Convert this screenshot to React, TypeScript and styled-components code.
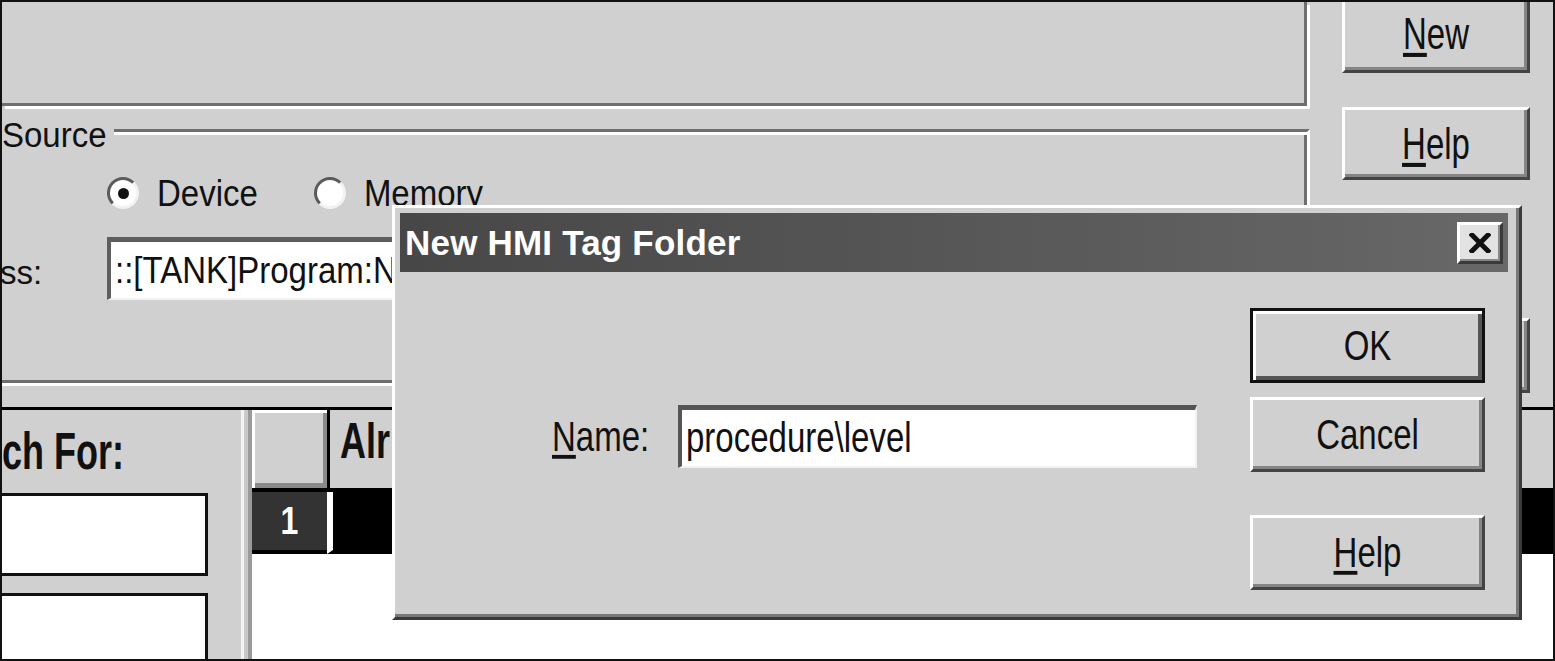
import styled, { createGlobalStyle } from "styled-components";

const face = `"Liberation Sans", Arial, sans-serif`;

const GlobalStyle = createGlobalStyle`
  html, body { margin: 0; padding: 0; background: #d0d0d0; }
  *, *::before, *::after { box-sizing: border-box; }
  body { font-family: ${face}; }
`;

const Screen = styled.div`
  position: relative;
  width: 1555px;
  height: 661px;
  border: 2px solid #111;
  background: #d0d0d0;
  overflow: hidden;
  display: flex;
  flex-direction: column;
  font-family: ${face};
  font-size: 33px;
  color: #111;
`;

// old 8pt dialog text blown up: glyphs are taller than Arial
const Stretch = styled.span<{ $sy?: number }>`
  display: inline-block;
  transform: scaleY(${(p) => p.$sy ?? 1.25});
`;

const Mnemonic = styled.span`
  text-decoration: underline;
  text-decoration-thickness: 3px;
  text-underline-offset: 3px;
`;

/* ---------- window behind ---------- */

const Upper = styled.div`
  display: grid;
  grid-template-columns: 1308px 1fr;
  height: 405px;
  flex-shrink: 0;
`;

const MainColumn = styled.div`
  display: flex;
  flex-direction: column;
  min-width: 0;
`;

const TopPanel = styled.div`
  width: 1305px;
  height: 104px;
  flex-shrink: 0;
  border-right: 3px solid #6e6e6e;
  border-bottom: 3px solid #6e6e6e;
  box-shadow: 3px 3px 0 #fff;
`;

const SourceGroup = styled.fieldset`
  margin: 6px 0 0 -22px;
  width: 1330px;
  height: 274px;
  padding: 0 0 0 22px;
  border: 3px solid;
  border-color: #6e6e6e #fff #fff #6e6e6e;
  box-shadow: inset 3px 3px 0 #fff, inset -3px -3px 0 #6e6e6e;
  min-width: 0;
`;

const GroupLegend = styled.legend`
  margin-left: -3px;
  padding: 0 7px 0 0;
  line-height: 36px;
  background: #d0d0d0;
  position: relative;
  top: 5px;
`;

const RadioRow = styled.div`
  display: flex;
  align-items: center;
  height: 36px;
  margin: 27px 0 0 102px;
`;

const RadioItem = styled.label`
  display: flex;
  align-items: center;
  gap: 18px;
  margin-right: 56px;
`;

const RadioDot = styled.span<{ $checked?: boolean }>`
  width: 32px;
  height: 32px;
  border-radius: 50%;
  background: #fff;
  border: 3px solid;
  border-color: #5a5a5a #f2f2f2 #f2f2f2 #5a5a5a;
  display: inline-flex;
  align-items: center;
  justify-content: center;
  &::after {
    content: "";
    width: 11px;
    height: 11px;
    border-radius: 50%;
    background: ${(p) => (p.$checked ? "#111" : "transparent")};
  }
`;

const FieldRow = styled.div`
  display: flex;
  align-items: center;
  margin-top: 26px;
`;

const FieldLabel = styled.span`
  width: 112px;
  margin-left: -10px;
  padding: 8px 0 0 5px;
`;

const AddressBox = styled.div`
  width: 700px;
  height: 63px;
  background: #fff;
  border-style: solid;
  border-width: 5px 2px 2px 4px;
  border-color: #5e5e5e #f2f2f2 #f2f2f2 #5e5e5e;
  padding-left: 4px;
  display: flex;
  align-items: center;
  white-space: nowrap;
`;

const SideButtons = styled.div`
  display: flex;
  flex-direction: column;
  padding-left: 32px;
`;

const SideButton = styled.button<{ $top: number; $h: number }>`
  width: 188px;
  height: ${(p) => p.$h}px;
  margin-top: ${(p) => p.$top}px;
  flex-shrink: 0;
  font: 33px ${face};
  color: #111;
  background: #d0d0d0;
  border: 3px solid;
  border-color: #fff #444 #444 #fff;
  box-shadow: inset -3px -3px 0 #858585;
  padding: 0;
`;

const Lower = styled.div`
  flex: 1;
  min-height: 0;
  display: grid;
  grid-template-columns: 239px 11px 1fr;
  border-top: 3px solid #000;
`;

const SearchPane = styled.div`
  display: flex;
  flex-direction: column;
`;

const SearchLabel = styled.div`
  margin-top: 22px;
  height: 40px;
  line-height: 40px;
  font-size: 36px;
  font-weight: 700;
`;

const SearchBox = styled.div<{ $top: number; $h: number }>`
  width: 206px;
  height: ${(p) => p.$h}px;
  margin-top: ${(p) => p.$top}px;
  flex-shrink: 0;
  background: #fff;
  border: 3px solid #111;
  border-left: none;
`;

const Splitter = styled.div`
  background: linear-gradient(
    to right,
    #f4f4f4 0 3px,
    #c9c9c9 3px 7px,
    #9a9a9a 7px 11px
  );
`;

const Grid = styled.div`
  display: grid;
  grid-template-columns: 75px 1fr;
  grid-template-rows: 82px 62px 1fr;
  background: #fff;
`;

const CornerCell = styled.div`
  background: #d0d0d0;
  border-bottom: 4px solid #000;
  box-shadow: inset 3px 3px 0 #fff, inset -4px -5px 0 #8a8a8a;
`;

const ColHeader = styled.div`
  background: #d0d0d0;
  border-left: 3px solid #000;
  border-bottom: 4px solid #000;
  padding: 11px 0 0 10px;
  font-size: 36px;
  font-weight: 700;
  line-height: 40px;
`;

const RowHeader = styled.div`
  background: #333;
  color: #fff;
  border-bottom: 4px solid #000;
  display: flex;
  align-items: center;
  justify-content: center;
  font-size: 32px;
  font-weight: 700;
`;

const RowCell = styled.div`
  background: #000;
  border-left: 6px solid #fff;
  border-bottom: 4px solid #000;
`;

const GridFill = styled.div`
  grid-column: 1 / -1;
`;

/* ---------- dialog on top ---------- */

const Dialog = styled.div`
  position: absolute;
  left: 390px;
  top: 203px;
  width: 1130px;
  height: 415px;
  background: #d0d0d0;
  border: 3px solid;
  border-color: #fff #3a3a3a #3a3a3a #fff;
  box-shadow: inset -3px -3px 0 #777;
  padding: 5px 11px 0 5px;
  display: flex;
  flex-direction: column;
`;

const TitleBar = styled.div`
  height: 59px;
  flex-shrink: 0;
  background: linear-gradient(to right, #474747, #5a5a5a 60%, #686868);
  display: flex;
  align-items: center;
  justify-content: space-between;
  padding: 0 5px 0 5px;
`;

const TitleText = styled.span`
  color: #fff;
  font-size: 35px;
  font-weight: 700;
  letter-spacing: 0.2px;
`;

const CloseButton = styled.button`
  width: 46px;
  height: 42px;
  padding: 0;
  background: #e2e2e2;
  border: 3px solid;
  border-color: #fff #3a3a3a #3a3a3a #fff;
  box-shadow: inset -2px -2px 0 #888;
  display: flex;
  align-items: center;
  justify-content: center;
`;

const DialogBody = styled.div`
  flex: 1;
  display: flex;
  padding: 36px 23px 0 0;
`;

const NameArea = styled.div`
  flex: 1;
  display: flex;
  align-items: center;
  align-self: flex-start;
  margin-top: 97px;
  padding-left: 152px;
`;

const NameLabel = styled.label`
  width: 126px;
`;

const NameInput = styled.div`
  width: 519px;
  height: 63px;
  background: #fff;
  border-style: solid;
  border-width: 5px 2px 2px 4px;
  border-color: #555 #f2f2f2 #f2f2f2 #555;
  padding-left: 4px;
  display: flex;
  align-items: center;
  white-space: nowrap;
`;

const ButtonColumn = styled.div`
  display: flex;
  flex-direction: column;
  width: 235px;
`;

const DialogButton = styled.button<{ $top: number; $default?: boolean }>`
  height: 75px;
  margin-top: ${(p) => p.$top}px;
  padding: 0;
  font: 33px ${face};
  color: #111;
  background: #d0d0d0;
  border: 3px solid;
  border-color: ${(p) =>
    p.$default ? "#111" : "#fff #444 #444 #fff"};
  box-shadow: ${(p) =>
    p.$default
      ? "inset 3px 3px 0 #fff, inset -4px -4px 0 #555"
      : "inset -3px -3px 0 #858585"};
`;

function CloseGlyph() {
  return (
    <svg width="22" height="20" viewBox="0 0 22 20">
      <path
        d="M3 2 L19 18 M19 2 L3 18"
        stroke="#111"
        strokeWidth="5"
        strokeLinecap="square"
      />
    </svg>
  );
}

export default function App() {
  return (
    <>
      <GlobalStyle />
      <Screen>
        <Upper>
          <MainColumn>
            <TopPanel />
            <SourceGroup>
              <GroupLegend>
                <Stretch $sy={1.08}>Source</Stretch>
              </GroupLegend>
              <RadioRow>
                <RadioItem>
                  <RadioDot $checked />
                  <Stretch $sy={1.14}>Device</Stretch>
                </RadioItem>
                <RadioItem>
                  <RadioDot />
                  <Stretch $sy={1.14}>Memory</Stretch>
                </RadioItem>
              </RadioRow>
              <FieldRow>
                <FieldLabel>ss:</FieldLabel>
                <AddressBox>
                  <Stretch $sy={1.14}>::[TANK]Program:N</Stretch>
                </AddressBox>
              </FieldRow>
            </SourceGroup>
          </MainColumn>
          <SideButtons>
            <SideButton $top={-8} $h={79}>
              <Stretch $sy={1.35}>
                <Mnemonic>N</Mnemonic>ew
              </Stretch>
            </SideButton>
            <SideButton $top={34} $h={73}>
              <Stretch $sy={1.35}>
                <Mnemonic>H</Mnemonic>elp
              </Stretch>
            </SideButton>
            <SideButton $top={138} $h={75} />
          </SideButtons>
        </Upper>

        <Lower>
          <SearchPane>
            <SearchLabel>
              <Stretch $sy={1.45}>ch For:</Stretch>
            </SearchLabel>
            <SearchBox $top={21} $h={83} />
            <SearchBox $top={17} $h={80} />
          </SearchPane>
          <Splitter />
          <Grid>
            <CornerCell />
            <ColHeader>
              <Stretch $sy={1.4}>Alr</Stretch>
            </ColHeader>
            <RowHeader>
              <Stretch $sy={1.2}>1</Stretch>
            </RowHeader>
            <RowCell />
            <GridFill />
          </Grid>
        </Lower>

        <Dialog>
          <TitleBar>
            <TitleText>New HMI Tag Folder</TitleText>
            <CloseButton aria-label="Close">
              <CloseGlyph />
            </CloseButton>
          </TitleBar>
          <DialogBody>
            <NameArea>
              <NameLabel>
                <Stretch $sy={1.28}>
                  <Mnemonic>N</Mnemonic>ame:
                </Stretch>
              </NameLabel>
              <NameInput>
                <Stretch $sy={1.28}>procedure\level</Stretch>
              </NameInput>
            </NameArea>
            <ButtonColumn>
              <DialogButton $top={0} $default>
                <Stretch $sy={1.28}>OK</Stretch>
              </DialogButton>
              <DialogButton $top={14}>
                <Stretch $sy={1.28}>Cancel</Stretch>
              </DialogButton>
              <DialogButton $top={43}>
                <Stretch $sy={1.28}>
                  <Mnemonic>H</Mnemonic>elp
                </Stretch>
              </DialogButton>
            </ButtonColumn>
          </DialogBody>
        </Dialog>
      </Screen>
    </>
  );
}
